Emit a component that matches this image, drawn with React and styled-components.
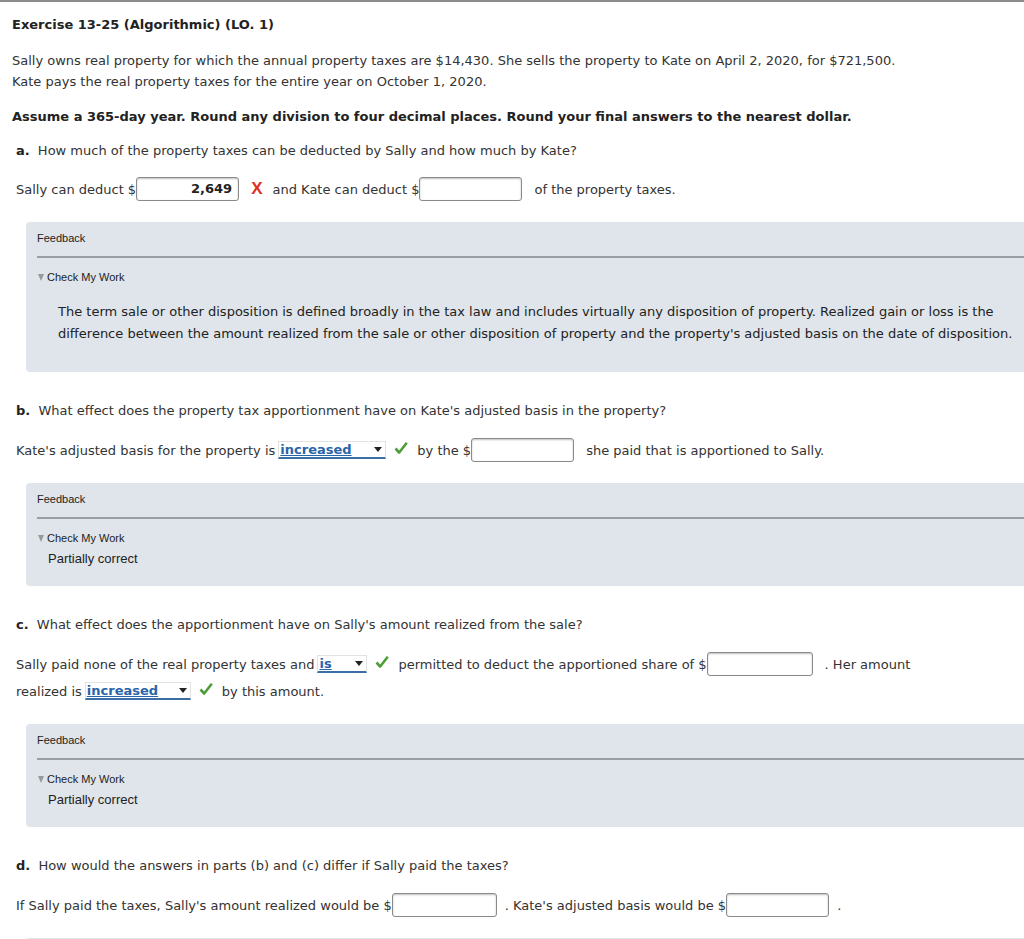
import React from 'react'
import styled, { createGlobalStyle } from 'styled-components'

const Global = createGlobalStyle`
  html, body {
    margin: 0;
    padding: 0;
    background: #fff;
    overflow-x: hidden;
  }
`

const Page = styled.div`
  border-top: 2px solid #8c8c8c;
  padding: 13px 0 0 12px;
  font-family: "DejaVu Sans", Verdana, sans-serif;
  font-size: 13px;
  color: #333;
`

const Title = styled.h1`
  margin: 0;
  font-size: 13px;
  line-height: 20px;
  font-weight: bold;
  color: #222;
`

const Intro = styled.p`
  margin: 15px 0 0;
  line-height: 21px;
`

const Instruction = styled.p`
  margin: 14px 0 0;
  line-height: 21px;
  font-weight: bold;
  color: #222;
`

const Question = styled.p`
  margin: ${p => p.$first ? '13px' : '28px'} 0 0 4px;
  line-height: 21px;
  b { color: #222; margin-right: 4px; }
`

const Answer = styled.div`
  margin: ${p => p.$first ? '14px' : '16px'} 0 0 4px;
  line-height: 27px;
  white-space: nowrap;
`

const Box = styled.span`
  display: inline-block;
  vertical-align: middle;
  box-sizing: border-box;
  width: ${p => p.$w || 103}px;
  height: 24px;
  margin: -3px ${p => p.$after || 12}px 0 0;
  padding: 0 6px;
  border: 1px solid #8a8a8a;
  border-radius: 3px;
  box-shadow: inset 0 1px 2px rgba(0, 0, 0, 0.25);
  background: #fff;
  text-align: right;
  font-weight: bold;
  line-height: 22px;
  color: #222;
`

const Select = styled.span`
  display: inline-flex;
  align-items: center;
  justify-content: space-between;
  vertical-align: middle;
  box-sizing: border-box;
  width: ${p => p.$w}px;
  height: 18px;
  margin: -3px 0 0 3px;
  padding: 0 3px 0 1px;
  border: 1px solid #e2e2e2;
  border-bottom: 2px solid #3b6ea5;
  font-weight: bold;
  color: #2a64a8;
  text-decoration: underline;
  line-height: 15px;
`

const Arrow = styled.span`
  width: 0;
  height: 0;
  border-left: 4px solid transparent;
  border-right: 4px solid transparent;
  border-top: 5px solid #222;
`

const Wrong = styled.span`
  display: inline-block;
  margin: 0 10px 0 0;
  font-family: "Liberation Sans", Arial, sans-serif;
  font-weight: bold;
  font-size: 17px;
  color: #e0301e;
`

const CheckWrap = styled.span`
  display: inline-block;
  vertical-align: middle;
  margin: -3px 9px 0 8px;
`

const Check = () => (
  <CheckWrap>
    <svg width="14" height="14" viewBox="0 0 14 14">
      <path d="M1.5 7.5 L5.2 11.5 L12.8 1.8" fill="none" stroke="#4c9f38" strokeWidth="2.6" strokeLinejoin="round" />
    </svg>
  </CheckWrap>
)

const Panel = styled.div`
  margin: 19px -20px 0 14px;
  padding: 9px 0 17px 11px;
  background: #dfe5ea;
  border-radius: 4px 0 0 4px;
  font-family: "Liberation Sans", Arial, sans-serif;
  color: #222;
`

const PanelLabel = styled.div`
  font-size: 11px;
  line-height: 14px;
`

const Divider = styled.div`
  margin-top: 11px;
  height: 2px;
  background: #9a9ea2;
`

const Toggle = styled.div`
  display: flex;
  align-items: center;
  gap: 3px;
  margin-top: 12px;
  font-size: 11px;
  line-height: 14px;
  &::before {
    content: "";
    width: 0;
    height: 0;
    margin-left: 1px;
    border-left: 3px solid transparent;
    border-right: 3px solid transparent;
    border-top: 7px solid #999;
  }
`

const Explain = styled.p`
  margin: 17px 0 10px 21px;
  font-family: "DejaVu Sans", Verdana, sans-serif;
  font-size: 13px;
  line-height: 22px;
  color: #222;
`

const Result = styled.div`
  margin: 6px 0 2px 11px;
  font-size: 13px;
  line-height: 16px;
`

const Feedback = ({ children }) => (
  <Panel>
    <PanelLabel>Feedback</PanelLabel>
    <Divider />
    <Toggle>Check My Work</Toggle>
    {children}
  </Panel>
)

export default function App() {
  return (
    <>
      <Global />
      <Page>
        <Title>Exercise 13-25 (Algorithmic) (LO. 1)</Title>
        <Intro>
          Sally owns real property for which the annual property taxes are $14,430. She sells the property to Kate on April 2, 2020, for $721,500.
          <br />
          Kate pays the real property taxes for the entire year on October 1, 2020.
        </Intro>
        <Instruction>Assume a 365-day year. Round any division to four decimal places. Round your final answers to the nearest dollar.</Instruction>

        <Question $first><b>a.</b> How much of the property taxes can be deducted by Sally and how much by Kate?</Question>
        <Answer $first>
          Sally can deduct $<Box>2,649</Box><Wrong>X</Wrong>and Kate can deduct $<Box />of the property taxes.
        </Answer>
        <Feedback>
          <Explain>
            The term sale or other disposition is defined broadly in the tax law and includes virtually any disposition of property. Realized gain or loss is the
            <br />
            difference between the amount realized from the sale or other disposition of property and the property's adjusted basis on the date of disposition.
          </Explain>
        </Feedback>

        <Question><b>b.</b> What effect does the property tax apportionment have on Kate's adjusted basis in the property?</Question>
        <Answer>
          Kate's adjusted basis for the property is<Select $w={108}>increased<Arrow /></Select><Check />by the $<Box />she paid that is apportioned to Sally.
        </Answer>
        <Feedback>
          <Result>Partially correct</Result>
        </Feedback>

        <Question><b>c.</b> What effect does the apportionment have on Sally's amount realized from the sale?</Question>
        <Answer>
          Sally paid none of the real property taxes and<Select $w={50}>is<Arrow /></Select><Check />permitted to deduct the apportioned share of $<Box $w={106} />. Her amount
          <br />
          realized is<Select $w={106}>increased<Arrow /></Select><Check />by this amount.
        </Answer>
        <Feedback>
          <Result>Partially correct</Result>
        </Feedback>

        <Question><b>d.</b> How would the answers in parts (b) and (c) differ if Sally paid the taxes?</Question>
        <Answer>
          If Sally paid the taxes, Sally's amount realized would be $<Box $w={105} $after={8} />. Kate's adjusted basis would be $<Box $w={103} $after={8} />.
        </Answer>
        <Panel />
      </Page>
    </>
  )
}
